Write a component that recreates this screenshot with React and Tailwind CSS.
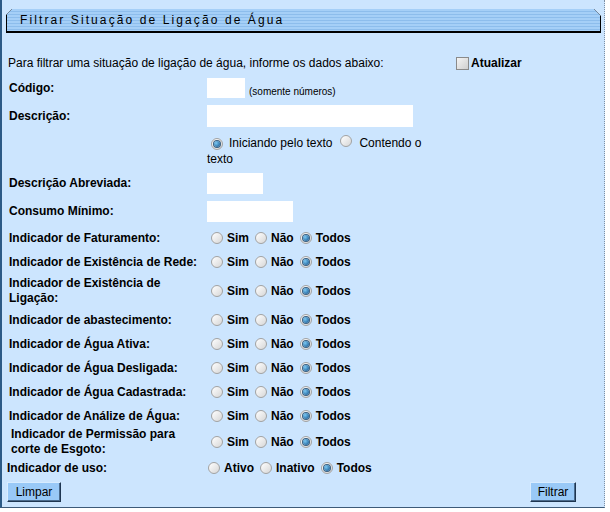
import React from 'react';

const Radio = ({ checked }) => (
  <span className="inline-flex items-center justify-center w-[12px] h-[12px] rounded-full border border-[#a2a2a2] bg-[linear-gradient(135deg,#ffffff,#d6d6d6)] shrink-0">
    {checked && <span className="w-[6px] h-[6px] rounded-full bg-[radial-gradient(circle_at_35%_35%,#7cc8f2,#0b4f8c)] ring-1 ring-[#3a5f80]" />}
  </span>
);

const Opts = ({ labels = ['Sim', 'Não', 'Todos'], sel = 2, first = 'ml-[4px]' }) => (
  <div className={`flex items-center font-bold ${first}`}>
    {labels.map((l, i) => (
      <span key={l} className={`flex items-center ${i > 0 ? 'ml-[6px]' : ''}`}>
        <Radio checked={i === sel} />
        <span className="ml-[4px]">{l}</span>
      </span>
    ))}
  </div>
);

function Row({ label, h = 'h-[24px]', lab = 'pl-[7px] pr-[6px]', children }) {
  return (
    <div className={`flex items-center ${h}`}>
      <div className={`w-[205px] shrink-0 font-bold leading-[15px] ${lab}`}>{label}</div>
      <div className="flex items-center">{children}</div>
    </div>
  );
}

const indicadores = [
  ['Indicador de Faturamento:', 'h-[24px]'],
  ['Indicador de Existência de Rede:', 'h-[24px]'],
  ['Indicador de Existência de Ligação:', 'h-[34px]'],
  ['Indicador de abastecimento:', 'h-[24px]'],
  ['Indicador de Água Ativa:', 'h-[24px]'],
  ['Indicador de Água Desligada:', 'h-[24px]'],
  ['Indicador de Água Cadastrada:', 'h-[24px]'],
  ['Indicador de Análize de Água:', 'h-[24px]'],
];

export default function App() {
  return (
    <div className="w-[610px] h-[512px] bg-white font-['Liberation_Sans',Arial,sans-serif] text-[12px] text-black">
      <div className="w-[605px] h-[508px] bg-[#cce5fe] border-l-2 border-l-[#2c5a86] border-r border-r-[#7d8fa3] border-dotted border-b border-b-[#3d5a78] [border-bottom-style:solid] [border-left-style:solid]">
        <div className="pt-[8px] pl-[4px]">
          <div className="w-[595px] h-[24px] bg-black [clip-path:polygon(6px_0,calc(100%-7px)_0,100%_7px,100%_100%,0_100%,0_6px)]">
            <div className="m-[1px] h-[22px] flex items-center pl-[13px] tracking-[2.1px] bg-[repeating-linear-gradient(to_bottom,#a5cff7_0px,#a5cff7_2px,#8dbdec_2px,#8dbdec_3px)] [clip-path:polygon(5px_0,calc(100%-6px)_0,100%_6px,100%_100%,0_100%,0_5px)]">
              Filtrar Situação de Ligação de Água
            </div>
          </div>
        </div>

        <div className="flex items-center h-[24px] mt-[18px] pl-[6px]">
          <div className="w-[448px]">Para filtrar uma situação de ligação de água, informe os dados abaixo:</div>
          <span className="w-[13px] h-[13px] border border-[#8a8a8a] bg-[linear-gradient(135deg,#f4f4f4,#cfcfcf)]" />
          <span className="ml-[2px] font-bold">Atualizar</span>
        </div>

        <Row label="Código:" h="h-[26px]">
          <div className="w-[38px] h-[20px] bg-white" />
          <span className="ml-[4px] mt-[6px] text-[10px]">(somente números)</span>
        </Row>
        <Row label="Descrição:" h="h-[30px]">
          <div className="w-[206px] h-[22px] bg-white" />
        </Row>
        <div className="flex pt-[4px] pb-[2px]">
          <div className="w-[205px] shrink-0" />
          <div className="leading-[16px]">
            <div className="flex items-center h-[16px]">
              <span className="ml-[4px]"><Radio checked /></span>
              <span className="ml-[6px]">Iniciando pelo texto</span>
              <span className="ml-[8px]"><Radio /></span>
              <span className="ml-[7px]">Contendo o</span>
            </div>
            <div className="h-[16px]">texto</div>
          </div>
        </div>
        <Row label="Descrição Abreviada:" h="h-[28px]">
          <div className="w-[56px] h-[21px] bg-white" />
        </Row>
        <Row label="Consumo Mínimo:" h="h-[29px]">
          <div className="w-[86px] h-[21px] bg-white" />
        </Row>

        {indicadores.map(([l, h]) => (
          <Row key={l} label={l} h={h}>
            <Opts />
          </Row>
        ))}
        <Row label="Indicador de Permissão para corte de Esgoto:" h="h-[28px]" lab="pl-[9px] pr-[4px]">
          <Opts />
        </Row>
        <Row label="Indicador de uso:" h="h-[24px]" lab="pl-[5px] pr-[8px]">
          <Opts labels={['Ativo', 'Inativo', 'Todos']} first="ml-[1px]" />
        </Row>

        <div className="flex justify-between items-center h-[24px] pl-[5px] pr-[28px]">
          <button className="w-[54px] h-[20px] bg-[#99c9f7] border border-[#1e3550] border-t-[#d8ecff] border-l-[#d8ecff] shadow-[inset_-1px_-1px_0_#4a6a8c]">Limpar</button>
          <button className="w-[46px] h-[20px] bg-[#99c9f7] border border-[#1e3550] border-t-[#d8ecff] border-l-[#d8ecff] shadow-[inset_-1px_-1px_0_#4a6a8c]">Filtrar</button>
        </div>
      </div>
    </div>
  );
}
